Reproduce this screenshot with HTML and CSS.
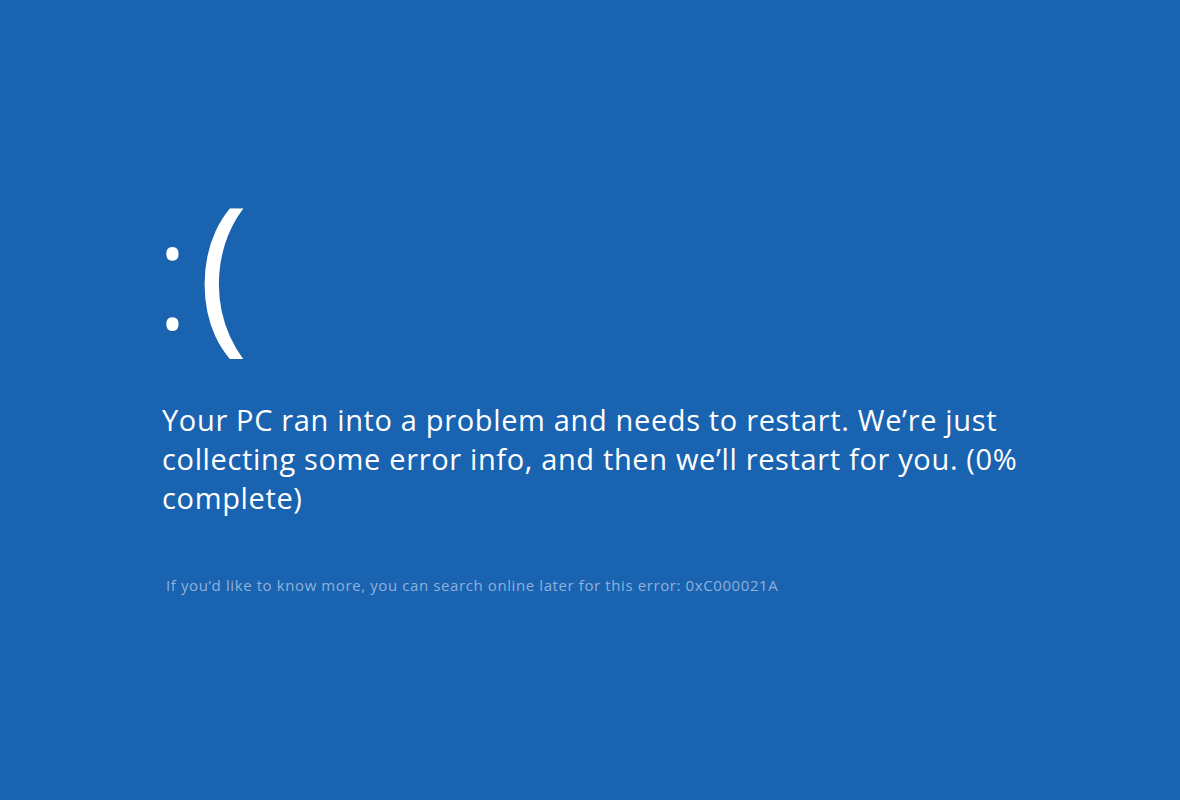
FILE: index.html
```html
<!DOCTYPE html>
<html lang="en">
<head>
<meta charset="utf-8">
<title>Blue screen</title>
<link rel="stylesheet" href="styles.css">
</head>
<body>
<main class="screen">
  <div class="face"><span class="colon">:</span><span class="paren">(</span></div>
  <p class="message">Your PC ran into a problem and needs to restart. We’re just collecting some error info, and then we’ll restart for you. (0% complete)</p>
  <p class="more">If you’d like to know more, you can search online later for this error: 0xC000021A</p>
</main>
</body>
</html>
```
FILE: styles.css
```css
html, body {
  margin: 0;
  padding: 0;
  background: #1a63b0;
}
.screen {
  width: 1180px;
  height: 800px;
  box-sizing: border-box;
  padding: 180px 0 0 158px;
  color: #ffffff;
  font-family: "Open Sans", "Noto Sans", sans-serif;
}
.face {
  display: flex;
  align-items: center;
  height: 170px;
}
.colon {
  font-size: 154px;
  font-weight: 300;
  line-height: 1;
  margin-top: 8px;
  margin-left: -4px;
}
.paren {
  font-size: 172px;
  font-weight: 400;
  line-height: 1;
  margin-left: 7px;
}
.message {
  margin: 50px 0 0 4px;
  width: 880px;
  font-size: 29px;
  letter-spacing: 0.65px;
  line-height: 39px;
}
.more {
  margin: 58px 0 0 8px;
  font-size: 15px;
  letter-spacing: 0.6px;
  color: #8fb1da;
}
```
